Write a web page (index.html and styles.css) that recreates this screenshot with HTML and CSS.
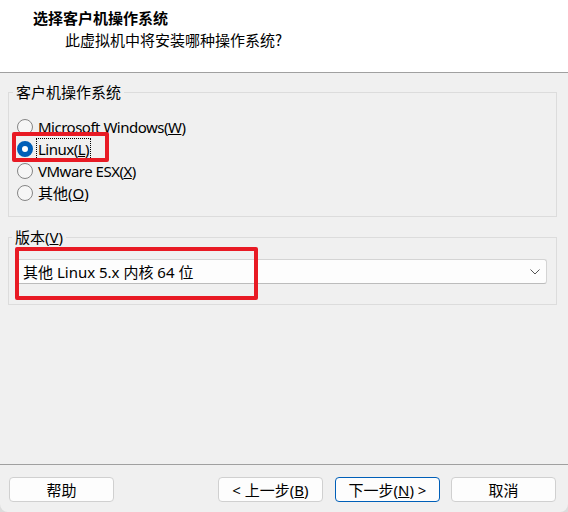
FILE: index.html
```html
<!DOCTYPE html>
<html lang="zh-CN">
<head>
<meta charset="utf-8">
<title>新建虚拟机向导</title>
<link rel="stylesheet" href="styles.css">
</head>
<body>
<div class="window">
  <div class="header">
    <div class="title">选择客户机操作系统</div>
    <div class="subtitle">此虚拟机中将安装哪种操作系统?</div>
  </div>
  <div class="content">
    <fieldset class="group group-os">
      <legend>客户机操作系统</legend>
      <label class="radio"><span class="dot"></span><span class="lbl latin">Microsoft Windows(<u>W</u>)</span></label>
      <label class="radio checked"><span class="dot"></span><span class="lbl latin focus">Linux(<u>L</u>)</span></label>
      <label class="radio"><span class="dot"></span><span class="lbl latin">VMware ESX(<u>X</u>)</span></label>
      <label class="radio"><span class="dot"></span><span class="lbl">其他(<u>O</u>)</span></label>
    </fieldset>
    <fieldset class="group group-ver">
      <legend>版本(<u>V</u>)</legend>
      <div class="combo">
        <span class="combo-text">其他 Linux 5.x 内核 64 位</span>
        <svg class="chev" width="10" height="6" viewBox="0 0 10 6"><path d="M0.5 0.5 L5 5 L9.5 0.5" fill="none" stroke="#555" stroke-width="1"/></svg>
      </div>
    </fieldset>
  </div>
  <div class="footer">
    <button class="btn">帮助</button>
    <div class="spacer"></div>
    <button class="btn">&lt; 上一步(<u>B</u>)</button>
    <button class="btn primary">下一步(<u>N</u>) &gt;</button>
    <button class="btn cancel">取消</button>
  </div>
  <div class="mark mark-linux"></div>
  <div class="mark mark-ver"></div>
</div>
</body>
</html>
```
FILE: styles.css
```css
* { box-sizing: border-box; }
html, body { margin: 0; padding: 0; }
body {
  background: #dcdcdc;
  font-family: "Noto Sans", "Noto Sans CJK SC", sans-serif;
  font-size: 15px;
  color: #000;
}
.window {
  position: relative;
  width: 568px;
  height: 512px;
  background: #f0f0f0;
  border-radius: 0 0 8px 8px;
  display: flex;
  flex-direction: column;
  overflow: hidden;
}
.header {
  height: 73px;
  background: #fff;
  border-bottom: 1px solid #a0a0a0;
  padding: 7px 0 0 33px;
}
.title {
  font-family: "Noto Sans CJK SC", sans-serif;
  font-weight: 700;
  font-size: 15px;
  line-height: 22px;
}
.subtitle {
  font-family: "Noto Sans CJK SC", sans-serif;
  font-size: 15px;
  line-height: 22px;
  padding-left: 32px;
}
.content {
  padding: 9px 11px 0 8px;
}
.group {
  margin: 0;
  border: 1px solid #dcdcdc;
  border-radius: 0;
  min-width: 0;
}
.group legend {
  padding: 0 3px;
  margin-left: -4px;
  line-height: 20px;
  height: 20px;
}
.group-os {
  padding: 14px 8px 12px 8px;
}
.group-ver {
  margin-top: 10px;
  padding: 12px 9px 20px 7px;
}
.radio {
  display: flex;
  align-items: center;
  height: 22px;
  line-height: 20px;
}
.dot {
  width: 16px;
  height: 16px;
  border-radius: 50%;
  border: 1px solid #858585;
  background: #f6f6f6;
  margin-right: 4px;
  flex: none;
}
.radio.checked .dot {
  border: 5px solid #005fb8;
  background: #fff;
}
.lbl { padding: 0 1px; }
.latin { letter-spacing: -0.5px; }
.focus { outline: 1px dotted #000; outline-offset: 0; }
.combo {
  height: 25px;
  background: #fdfdfd;
  border: 1px solid #d4d4d4;
  border-bottom-color: #bcbcbc;
  border-radius: 3px;
  display: flex;
  align-items: center;
  padding: 0 6px 0 6px;
}
.combo-text { flex: 1; line-height: 22px; }
.footer {
  margin-top: auto;
  border-top: 1px solid #a0a0a0;
  padding: 12px 12px 10px 9px;
  display: flex;
  align-items: center;
}
.spacer { flex: 1; }
.btn {
  font-family: "Noto Sans", "Noto Sans CJK SC", sans-serif;
  font-size: 15px;
  width: 105px;
  height: 25px;
  padding: 0;
  background: #fdfdfd;
  border: 1px solid #d0d0d0;
  border-radius: 4px;
  color: #000;
  line-height: 22px;
}
.btn.primary {
  border: 1px solid #005fb8;
  margin-left: 12px;
}
.btn.cancel { margin-left: 11px; }
.mark {
  position: absolute;
  border: 4px solid #e81a24;
  border-radius: 2px;
}
.mark-linux { left: 12px; top: 132px; width: 97px; height: 30px; }
.mark-ver { left: 15px; top: 247px; width: 243px; height: 53px; }
```
